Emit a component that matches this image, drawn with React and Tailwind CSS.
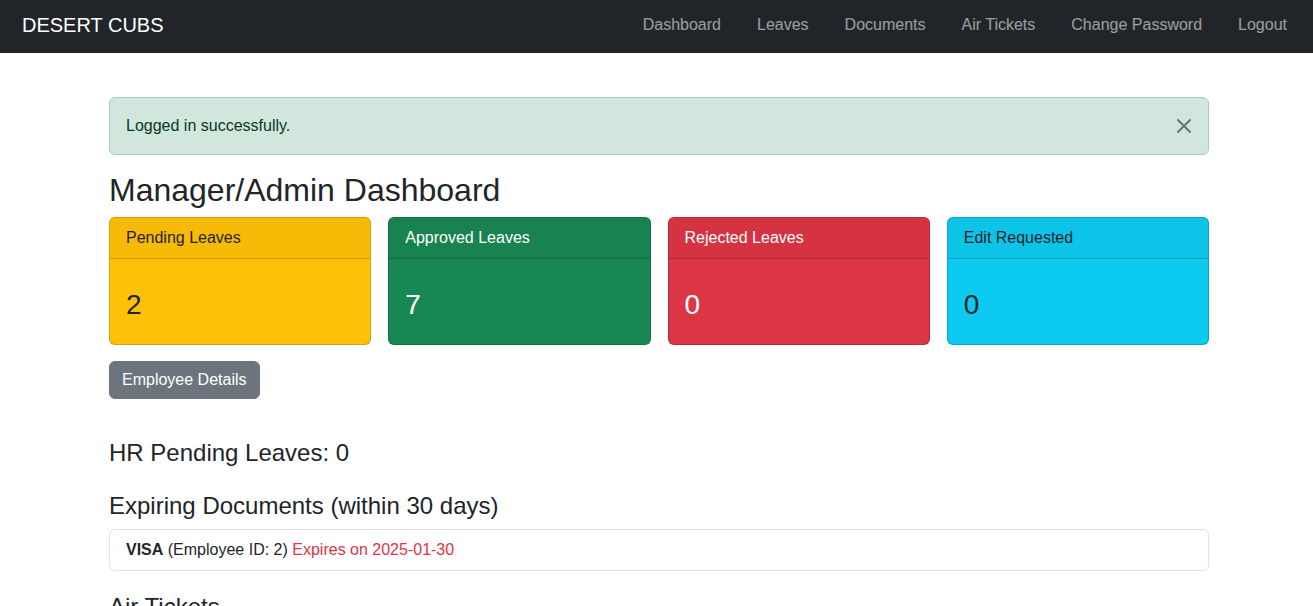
import React from "react";

const navLinks = ["Dashboard", "Leaves", "Documents", "Air Tickets", "Change Password", "Logout"];

const stats = [
  { title: "Pending Leaves", value: 2, cls: "bg-[#ffc107] text-[#212529]" },
  { title: "Approved Leaves", value: 7, cls: "bg-[#198754] text-white" },
  { title: "Rejected Leaves", value: 0, cls: "bg-[#dc3545] text-white" },
  { title: "Edit Requested", value: 0, cls: "bg-[#0dcaf0] text-[#212529]" },
];

function Navbar() {
  return (
    <nav className="h-[53px] bg-[#212529] flex items-center justify-between pl-[22px] pr-[26px] pb-[3px]">
      <a className="text-white text-[20px] leading-[30px]">DESERT CUBS</a>
      <ul className="flex items-center gap-[36px]">
        {navLinks.map((l) => (
          <li key={l}>
            <a className="text-white/55 text-[16px] leading-6">{l}</a>
          </li>
        ))}
      </ul>
    </nav>
  );
}

export default function App() {
  return (
    <div className="h-[606px] overflow-hidden bg-white text-[#212529] font-['Liberation_Sans',Arial,sans-serif] text-[16px] leading-6">
      <Navbar />

      <div className="ml-[109px] w-[1100px] pt-[44px]">
        {/* Alerta */}
        <div className="flex items-center justify-between bg-[#d1e7dd] border border-[#a3cfbb] text-[#0a3622] rounded-[6px] py-4 pl-4 pr-4">
          <span>Logged in successfully.</span>
          <button className="w-4 h-4 opacity-50" title="Close">
            <svg viewBox="0 0 16 16" width="16" height="16">
              <path d="M1.5 1.5 L14.5 14.5 M14.5 1.5 L1.5 14.5" stroke="#000" strokeWidth="2" />
            </svg>
          </button>
        </div>

        <h2 className="mt-4 mb-2 text-[32px] leading-[1.2] font-normal">Manager/Admin Dashboard</h2>

        {/* Tarjetas */}
        <div className="grid grid-cols-4 gap-[17px]">
          {stats.map((s) => (
            <div key={s.title} className={`rounded-[6px] border border-black/[0.175] overflow-hidden ${s.cls}`}>
              <div className="bg-black/[0.03] border-b border-black/[0.175] px-4 py-2">{s.title}</div>
              <div className="h-[85px] px-4 pt-[29px]">
                <div className="text-[28px] leading-[1.2]">{s.value}</div>
              </div>
            </div>
          ))}
        </div>

        <button className="mt-4 bg-[#6c757d] border border-[#6c757d] text-white rounded-[6px] px-3 py-1.5 leading-6">
          Employee Details
        </button>

        <h4 className="mt-[40px] text-[24px] leading-[1.2]">HR Pending Leaves: 0</h4>

        <h4 className="mt-6 text-[24px] leading-[1.2]">Expiring Documents (within 30 days)</h4>
        <ul className="mt-[8px]">
          <li className="border border-[#dee2e6] rounded-[6px] px-4 py-2">
            <strong className="font-bold">VISA</strong> (Employee ID: 2){" "}
            <span className="text-[#dc3545]">Expires on 2025-01-30</span>
          </li>
        </ul>

        <h4 className="mt-[22px] text-[24px] leading-[1.2]">Air Tickets</h4>
      </div>
    </div>
  );
}
